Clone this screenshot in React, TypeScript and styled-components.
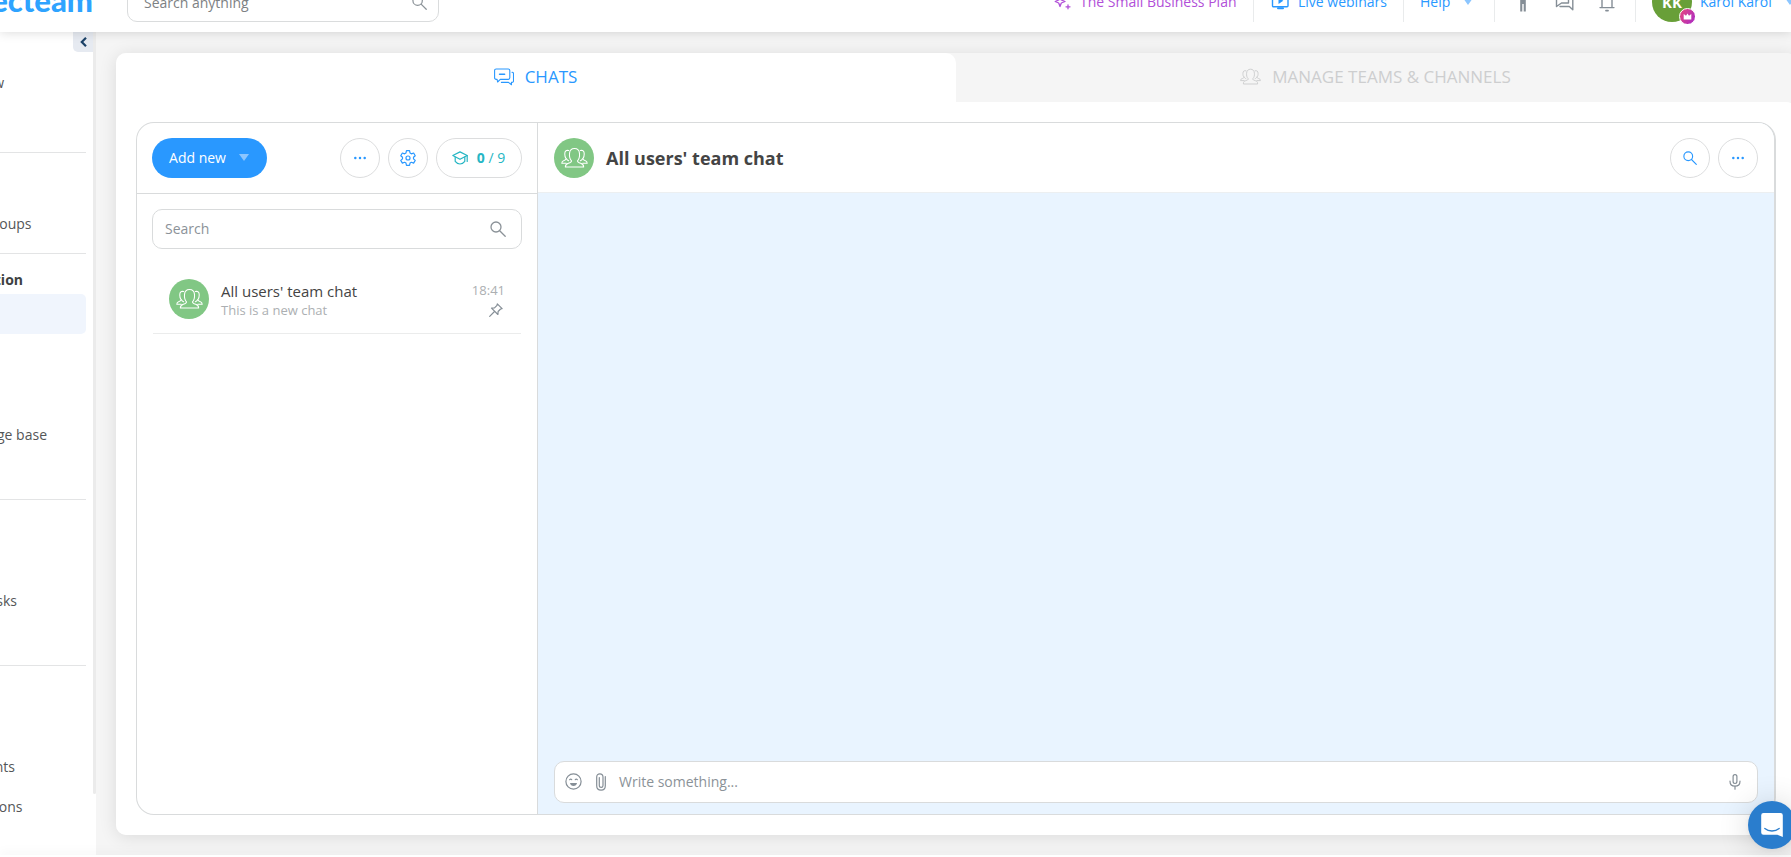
import React from "react";
import styled, { createGlobalStyle, css } from "styled-components";

const GlobalStyle = createGlobalStyle`
  * { box-sizing: border-box; }
  html, body { margin: 0; padding: 0; height: 100%; overflow: hidden; }
  body { font-family: "Open Sans", "Noto Sans", sans-serif; color: #444; background: #fff; }
  button { font-family: inherit; padding: 0; cursor: pointer; }
  svg { display: block; flex: none; }
`;

const Page = styled.div`
  display: flex;
  flex-direction: column;
  width: 1791px;
  height: 857px;
  overflow: hidden;
`;

const Header = styled.header`
  position: relative;
  z-index: 3;
  height: 32px;
  flex: none;
  display: flex;
  align-items: flex-end;
  background: #fff;
  box-shadow: 0 0 12px rgba(0, 0, 0, 0.16);
`;

const HeaderBar = styled.div`
  display: flex;
  align-items: center;
  width: 100%;
  height: 60px;
  flex: none;
`;

const Logo = styled.div`
  width: 93px;
  padding-bottom: 5px;
  display: flex;
  justify-content: flex-end;
  font: 900 31px/40px Lato, sans-serif;
  color: #2ea3ff;
`;

const GlobalSearch = styled.div`
  width: 312px;
  height: 40px;
  margin-left: 34px;
  padding: 0 11px 0 16px;
  display: flex;
  align-items: center;
  justify-content: space-between;
  border: 1px solid #dadcdd;
  border-radius: 10px;
  color: #7d8183;
  font-size: 14px;
`;

const HeaderRight = styled.div`
  margin-left: auto;
  display: flex;
  align-items: center;
  height: 40px;
`;

const HeaderCell = styled.div<{ $w: number; $pl?: number; $gap?: number; $color?: string }>`
  display: flex;
  align-items: center;
  flex: none;
  width: ${(p) => p.$w}px;
  height: 40px;
  padding: 0 0 2px ${(p) => p.$pl ?? 0}px;
  gap: ${(p) => p.$gap ?? 0}px;
  color: ${(p) => p.$color ?? "#2998ff"};
  font-size: 14px;
  white-space: nowrap;
  & + & { border-left: 1px solid #e9ebec; }
`;

const HeaderIcons = styled.div`
  display: flex;
  align-items: center;
  gap: 25px;
  & > :first-child { margin-right: 3px; }
`;

const Caret = styled.span<{ $color: string; $ml?: number }>`
  width: 0;
  height: 0;
  margin-left: ${(p) => p.$ml ?? 0}px;
  border: 5px solid transparent;
  border-top: 7px solid ${(p) => p.$color};
  border-bottom: 0;
`;

const UserAvatar = styled.div`
  position: relative;
  flex: none;
  width: 40px;
  height: 40px;
  margin-bottom: -2px;
  border-radius: 50%;
  background: #689f38;
  color: #fff;
  font-size: 15px;
  font-weight: 700;
  line-height: 41px;
  text-align: center;
`;

const CrownBadge = styled.span`
  position: absolute;
  right: -4px;
  bottom: -3px;
  width: 17px;
  height: 17px;
  display: flex;
  align-items: center;
  justify-content: center;
  border: 1px solid #fff;
  border-radius: 50%;
  background: linear-gradient(120deg, #e8467c, #a92bc8);
`;

const Body = styled.div`
  flex: 1;
  min-height: 0;
  display: flex;
  background: #f5f5f5;
`;

const Sidebar = styled.aside`
  position: relative;
  width: 96px;
  flex: none;
  display: flex;
  align-items: flex-start;
  background: #fff;
`;

const Nav = styled.nav`
  width: 93px;
  padding: 31px 7px 0 0;
`;

const ScrollThumb = styled.div`
  width: 3px;
  height: 762px;
  background: #ebebeb;
  border-radius: 0 0 2px 2px;
`;

const Collapse = styled.button`
  position: absolute;
  top: 0;
  right: 3px;
  width: 20px;
  height: 20px;
  display: flex;
  align-items: center;
  justify-content: center;
  border: 0;
  border-radius: 0 0 0 5px;
  background: #e6eaf1;
`;

const NavItem = styled.div<{ $end?: number; $mt?: number; $active?: boolean; $heading?: boolean }>`
  height: 40px;
  margin-top: ${(p) => p.$mt ?? 0}px;
  padding-right: ${(p) => 86 - (p.$end ?? 0)}px;
  padding-bottom: ${(p) => (p.$heading ? 0 : 2)}px;
  display: flex;
  align-items: center;
  justify-content: flex-end;
  white-space: nowrap;
  font-size: 14px;
  color: #545657;
  ${(p) => p.$active && css`background: #f0f5fd; border-radius: 0 5px 5px 0;`}
  ${(p) => p.$heading && css`padding-top: 11px; font-weight: 700; color: #3d4142;`}
`;

const NavDivider = styled.div<{ $mt: number }>`
  height: 1px;
  margin-top: ${(p) => p.$mt}px;
  background: #e3e4e5;
`;

const Main = styled.main`
  flex: none;
  width: 1700px;
  padding: 21px 0 20px 20px;
`;

const Card = styled.section`
  width: 1680px;
  height: 782px;
  display: flex;
  flex-direction: column;
  border-radius: 10px;
  box-shadow: 0 2px 18px rgba(0, 0, 0, 0.11);
`;

const Tabs = styled.div`
  display: flex;
  height: 49px;
  flex: none;
  background: #f5f5f5;
  border-radius: 10px 10px 0 0;
`;

const Tab = styled.div<{ $active?: boolean }>`
  width: 840px;
  display: flex;
  align-items: center;
  justify-content: center;
  gap: 11px;
  padding: 0 1px 2px 0;
  font-size: 17px;
  color: ${(p) => (p.$active ? "#2998ff" : "#cdcecf")};
  background: ${(p) => (p.$active ? "#fff" : "transparent")};
  border-radius: 10px 10px 0 0;
`;

const CardBody = styled.div`
  flex: 1;
  padding: 20px;
  background: #fff;
  border-radius: 0 10px 10px 10px;
`;

const ChatFrame = styled.div`
  display: flex;
  width: 1640px;
  height: 693px;
  overflow: hidden;
  border: 1px solid #d9dbdc;
  border-right-width: 2px;
  border-radius: 18px;
`;

const ChatList = styled.div`
  width: 401px;
  flex: none;
  border-right: 1px solid #d9dbdc;
`;

const ListToolbar = styled.div`
  height: 71px;
  display: flex;
  align-items: center;
  gap: 8px;
  padding: 0 15px 1px;
  border-bottom: 1px solid #d9dbdc;
`;

const AddButton = styled.button`
  width: 115px;
  height: 40px;
  margin-right: auto;
  padding-right: 1px;
  display: flex;
  align-items: center;
  justify-content: center;
  gap: 13px;
  border: 0;
  border-radius: 20px;
  background: #2998ff;
  color: #fff;
  font-size: 14px;
`;

const RoundButton = styled.button<{ $w?: number; $color?: string }>`
  width: ${(p) => p.$w ?? 40}px;
  height: 40px;
  padding-right: ${(p) => (p.$w ? 1 : 0)}px;
  display: flex;
  align-items: center;
  justify-content: center;
  gap: 9px;
  border: 1px solid #dcddde;
  border-radius: 20px;
  background: #fff;
  color: ${(p) => p.$color ?? "#2998ff"};
  font-size: 14px;
`;

const ListSearch = styled.div`
  height: 40px;
  margin: 15px 15px 0;
  padding: 0 15px 1px 12px;
  display: flex;
  align-items: center;
  justify-content: space-between;
  border: 1px solid #d9dbdc;
  border-radius: 10px;
  color: #8b9298;
  font-size: 14px;
`;

const ChatRow = styled.div`
  height: 85px;
  margin: 0 16px;
  padding: 30px 16px 0 16px;
  display: flex;
  border-bottom: 1px solid #ebecec;
`;

const TeamAvatar = styled.div`
  width: 40px;
  height: 40px;
  flex: none;
  display: flex;
  align-items: center;
  justify-content: center;
  border-radius: 50%;
  background: #81c784;
  color: #fff;
`;

const RowText = styled.div`
  flex: 1;
  padding: 2px 0 0 12px;
`;

const RowTitle = styled.div`
  font-size: 15px;
  line-height: 20px;
  color: #444;
`;

const RowNote = styled.div`
  font-size: 13px;
  line-height: 18px;
  color: #acafb2;
`;

const RowMeta = styled.div`
  display: flex;
  flex-direction: column;
  align-items: flex-end;
  gap: 4px;
  padding-top: 2px;
  font-size: 13px;
  line-height: 18px;
  color: #acafb2;
  & svg { margin-right: 2px; }
`;

const Conversation = styled.div`
  flex: 1;
  display: flex;
  flex-direction: column;
  background: #e9f4ff;
`;

const ConversationHeader = styled.div`
  height: 70px;
  flex: none;
  display: flex;
  align-items: center;
  gap: 8px;
  padding: 0 16px 0;
  border-bottom: 1px solid #eceff1;
  background: #fff;
`;

const ConversationTitle = styled.h1`
  flex: 1;
  margin: 0 0 0 4px;
  font-size: 18px;
  font-weight: 700;
  color: #444;
`;

const Composer = styled.div`
  height: 42px;
  margin: auto 16px 11px;
  padding: 0 16px 1px 10px;
  display: flex;
  align-items: center;
  border: 1px solid #d9dbdc;
  border-radius: 10px;
  background: #fff;
  color: #8b9298;
  font-size: 14px;
`;

const ComposerText = styled.span`
  flex: 1;
  margin-left: 13px;
`;

const ComposerGap = styled.span`
  width: 14px;
`;

const Footer = styled.footer`
  position: relative;
  z-index: 2;
  height: 2px;
  flex: none;
  background: #fff;
  box-shadow: 0 0 12px rgba(0, 0, 0, 0.15);
`;

const Messenger = styled.button`
  position: fixed;
  z-index: 4;
  left: 1748px;
  top: 801px;
  width: 48px;
  height: 48px;
  display: flex;
  align-items: center;
  justify-content: center;
  border: 0;
  border-radius: 50%;
  background: #2a7dcd;
  box-shadow: 0 2px 32px rgba(0, 0, 0, 0.16), 0 1px 6px rgba(0, 0, 0, 0.06);
`;

const stroke = { fill: "none", stroke: "currentColor", strokeLinecap: "round", strokeLinejoin: "round" } as const;

const Magnifier = ({ size = 16, color = "#8b9298" }: { size?: number; color?: string }) => (
  <svg width={size} height={size} viewBox="0 0 16 16" color={color} {...stroke} strokeWidth="1.3">
    <circle cx="6" cy="6" r="5" />
    <path d="M9.7 9.7 15.2 15.2" />
  </svg>
);

const People = ({ width, sw = 1.1 }: { width: number; sw?: number }) => (
  <svg width={width} height={(width * 22) / 28} viewBox="0 0 28 22" {...stroke} strokeWidth={sw}>
    <path d="M4.5 20.8c0-2.7 1.1-3.4 3.2-3.9 2-.5 3.2-.9 3.2-2.6-1.800-1.700-2.300-4.200-2.100-7.400C9 3.500 11 1.600 14 1.600s5 1.900 5.200 5.300c.2 3.200-.3 5.700-2.100 7.400 0 1.700 1.200 2.100 3.200 2.600 2.100.5 3.200 1.200 3.200 3.900z" />
    <path d="M8 3.7C5.400 3 3.900 4.300 3.900 7.200c0 2 .1 3.200 1.300 4.700 0 1.400-.6 1.700-2 2.200C1.400 14.700.8 15 .8 16.800h4.600M5.600 12c.4 1.300 1 1.700 2.300 2.300" />
    <path d="M20 3.7c2.600-.7 4.100.6 4.100 3.500 0 2-.1 3.200-1.300 4.700 0 1.400.6 1.700 2 2.200 1.800.6 2.400.9 2.400 2.700h-4.600M22.400 12c-.4 1.300-1 1.700-2.300 2.300" />
  </svg>
);

const Dots = () => (
  <svg width="12" height="4" viewBox="0 0 12 4" fill="currentColor">
    <circle cx="1.3" cy="2" r="1.25" />
    <circle cx="6" cy="2" r="1.25" />
    <circle cx="10.7" cy="2" r="1.25" />
  </svg>
);

const ChatsIcon = () => (
  <svg width="20" height="18" viewBox="0 0 20 18" {...stroke} strokeWidth="1.1">
    <path d="M2.2 1h12c1 0 1.6.6 1.6 1.6v7.2c0 1-.6 1.6-1.600 1.600H6.300L3.600 14l-.5-2.600h-.9C1.200 11.400.6 10.800.6 9.800V2.600C.6 1.600 1.200 1 2.200 1z" />
    <path d="M5.6 6.2h5" strokeWidth="1.6" />
    <path d="M18 4.2c1 0 1.5.6 1.5 1.5v7.2c0 1-.6 1.500-1.500 1.500h-.6l.1 2.300-3-2.300H7.400" />
  </svg>
);

const Gear = () => (
  <svg width="16" height="16" viewBox="0.5 0.5 23 23" {...stroke} strokeWidth="1.7">
    <path d="M9.8 1.500h4.400l.7 3.300 2 1.200 3.200-1.200 2.300 3.900-2.500 2.200v2.300l2.500 2.200-2.300 3.900-3.200-1.200-2 1.200-.7 3.300H9.800l-.7-3.300-2-1.200-3.200 1.200-2.300-3.900 2.500-2.200v-2.300L1.600 8.700l2.300-3.900L7.100 6l2-1.200z" />
    <circle cx="12" cy="12" r="2.9" />
  </svg>
);

const Graduation = () => (
  <svg width="16" height="14" viewBox="0 0 16 14" {...stroke} strokeWidth="1.2">
    <path d="M8 .9 15.200 4.500 8 8.300.8 4.500z" />
    <path d="M3.200 6v4.300C4.300 11.700 6 13 8 13s3.700-1.300 4.800-2.700V6M15.200 4.600v5.800" />
  </svg>
);

const Pin = () => (
  <svg width="14" height="14" viewBox="0 0 14 14" color="#858e96" {...stroke} strokeWidth="1.2">
    <path d="M8.300.9 13.100 5.700l-1.500.3-2.500 2.500-.2 3L2.500 5.100l3-.2L8 2.400zM5.500 8.500.7 13.300" />
  </svg>
);

const Smiley = () => (
  <svg width="17" height="17" viewBox="0 0 17 17" color="#858e96" {...stroke} strokeWidth="1.2">
    <circle cx="8.5" cy="8.5" r="7.6" />
    <path d="M4.700 6.700q1-1.100 2 0M10.300 6.700q1-1.100 2 0" />
    <path d="M5 10h7c-.3 1.900-1.700 3-3.500 3S5.300 11.900 5 10z" fill="#858e96" stroke="none" />
  </svg>
);

const Clip = () => (
  <svg width="10" height="18" viewBox="0 0 10 18" color="#858e96" {...stroke} strokeWidth="1.2">
    <path d="M9.300 3.500V12.800c0 2.700-1.700 4.400-4.200 4.400S.7 15.500.7 12.800V4C.7 2 2 .8 3.900.8S7 2 7 4v8.500c0 1.100-.7 1.900-1.800 1.900s-1.900-.8-1.900-1.900V4.500" />
  </svg>
);

const Mic = () => (
  <svg width="12" height="16" viewBox="0 0 12 16" color="#858e96" {...stroke} strokeWidth="1.2">
    <rect x="4.1" y=".7" width="3.8" height="8.8" rx="1.9" />
    <path d="M1 7.200c0 3 2 4.900 5 4.900s5-1.900 5-4.900M6 12.200v3" />
  </svg>
);

const Sparkles = () => (
  <svg width="18" height="18" viewBox="0 0 18 18" {...stroke} strokeWidth="1.3">
    <path d="M6 4.500 7.300 8 11 9.500 7.300 11 6 14.500 4.700 11 1.200 9.500 4.700 8z" />
    <path d="M14 12.800v4M12 14.800h4M14 1.500v4M12 3.500h4" />
  </svg>
);

const Webinar = () => (
  <svg width="18" height="17" viewBox="0 0 18 17" {...stroke} strokeWidth="1.4">
    <rect x="1.5" y="1.5" width="15.5" height="12.3" rx="1" />
    <path d="M7.500 4.500v6.500l4.800-3.200z" fill="currentColor" stroke="none" />
    <path d="M7 15.300h5" strokeWidth="2" />
  </svg>
);

const Person = () => (
  <svg width="8" height="24" viewBox="0 0 8 24" fill="#858e96">
    <circle cx="4" cy="3" r="2.5" />
    <path d="M1.200 7h5.600v15.500H4.700V15H3.300v7.500H1.200z" />
  </svg>
);

const Messages = () => (
  <svg width="19" height="20" viewBox="0 0 19 20" color="#858e96" {...stroke} strokeWidth="1.4">
    <path d="M1.500 2.500h12v9.500H6.500L1.500 15.500z" />
    <path d="M15.500 6.500h2.300v12.300L14.300 15.500H5" />
  </svg>
);

const Bell = () => (
  <svg width="16" height="22" viewBox="0 0 16 22" color="#858e96" {...stroke} strokeWidth="1.4">
    <path d="M1 17.600h14M3 17.300V9.500c0-3.200 2-5.300 5-5.300s5 2.100 5 5.300v7.800M8 2v2" />
    <path d="M7 20.600h2" strokeWidth="1.8" />
  </svg>
);

export default function App() {
  return (
    <Page>
      <GlobalStyle />
      <Header>
        <HeaderBar>
          <Logo>ecteam</Logo>
          <GlobalSearch>
            Search anything
            <Magnifier size={15} />
          </GlobalSearch>
          <HeaderRight>
            <HeaderCell $w={199} $gap={8} $color="#b14fd8">
              <Sparkles />
              The Small Business Plan
            </HeaderCell>
            <HeaderCell $w={150} $pl={17} $gap={9}>
              <Webinar />
              Live webinars
            </HeaderCell>
            <HeaderCell $w={91} $pl={16} $gap={13}>
              Help
              <Caret $color="#8cc6ff" />
            </HeaderCell>
            <HeaderCell $w={141} $pl={24}>
              <HeaderIcons>
                <Person />
                <Messages />
                <Bell />
              </HeaderIcons>
            </HeaderCell>
            <HeaderCell $w={156} $pl={16} $gap={8}>
              <UserAvatar>
                KK
                <CrownBadge>
                  <svg width="9" height="7" viewBox="0 0 9 7" fill="#fff">
                    <path d="M.7 6.500V1L3 2.700 4.500.6 6 2.700 8.300 1v5.500z" />
                  </svg>
                </CrownBadge>
              </UserAvatar>
              Karol Karol
              <Caret $color="#8cc6ff" $ml={5} />
            </HeaderCell>
          </HeaderRight>
        </HeaderBar>
      </Header>

      <Body>
        <Sidebar>
          <Nav>
            <NavItem $end={4}>w</NavItem>
            <NavDivider $mt={49} />
            <NavItem $mt={51} $end={31.5}>oups</NavItem>
            <NavDivider $mt={9} />
            <NavItem $heading $end={23}>tion</NavItem>
            <NavItem $active />
            <NavItem $mt={81} $end={47}>ge base</NavItem>
            <NavDivider $mt={44} />
            <NavItem $mt={81} $end={17}>sks</NavItem>
            <NavDivider $mt={44} />
            <NavItem $mt={81} $end={15}>nts</NavItem>
            <NavItem $end={22.5}>ons</NavItem>
          </Nav>
          <ScrollThumb />
          <Collapse>
            <svg width="7" height="10" viewBox="0 0 7 10" fill="none" stroke="#1b4268" strokeWidth="2.2">
              <path d="M6 .8 1.800 5 6 9.200" />
            </svg>
          </Collapse>
        </Sidebar>

        <Main>
          <Card>
            <Tabs>
              <Tab $active>
                <ChatsIcon />
                CHATS
              </Tab>
              <Tab>
                <People width={21} sw={1.3} />
                MANAGE TEAMS &amp; CHANNELS
              </Tab>
            </Tabs>
            <CardBody>
              <ChatFrame>
                <ChatList>
                  <ListToolbar>
                    <AddButton>
                      Add new
                      <Caret $color="#8cc6ff" />
                    </AddButton>
                    <RoundButton>
                      <Dots />
                    </RoundButton>
                    <RoundButton>
                      <Gear />
                    </RoundButton>
                    <RoundButton $w={86} $color="#26b6c4">
                      <Graduation />
                      <span>
                        <b>0</b> / 9
                      </span>
                    </RoundButton>
                  </ListToolbar>
                  <ListSearch>
                    Search
                    <Magnifier />
                  </ListSearch>
                  <ChatRow>
                    <TeamAvatar>
                      <People width={27} />
                    </TeamAvatar>
                    <RowText>
                      <RowTitle>All users' team chat</RowTitle>
                      <RowNote>This is a new chat</RowNote>
                    </RowText>
                    <RowMeta>
                      18:41
                      <Pin />
                    </RowMeta>
                  </ChatRow>
                </ChatList>
                <Conversation>
                  <ConversationHeader>
                    <TeamAvatar>
                      <People width={27} />
                    </TeamAvatar>
                    <ConversationTitle>All users' team chat</ConversationTitle>
                    <RoundButton>
                      <Magnifier size={14} color="#2998ff" />
                    </RoundButton>
                    <RoundButton>
                      <Dots />
                    </RoundButton>
                  </ConversationHeader>
                  <Composer>
                    <Smiley />
                    <ComposerGap />
                    <Clip />
                    <ComposerText>Write something...</ComposerText>
                    <Mic />
                  </Composer>
                </Conversation>
              </ChatFrame>
            </CardBody>
          </Card>
        </Main>
      </Body>
      <Footer />
      <Messenger>
        <svg width="22" height="24" viewBox="0 0 22 24" fill="#fff">
          <path d="M2.500 0h17A2.300 2.300 0 0 1 21.800 2.300V24l-5.400-2.200H2.500A2.300 2.300 0 0 1 .2 19.500V2.300A2.300 2.300 0 0 1 2.500 0z" />
          <path d="M3.800 15.500c4 3.300 10.300 3.300 14.400 0" fill="none" stroke="#2a7dcd" strokeWidth="1.3" strokeLinecap="round" />
        </svg>
      </Messenger>
    </Page>
  );
}
